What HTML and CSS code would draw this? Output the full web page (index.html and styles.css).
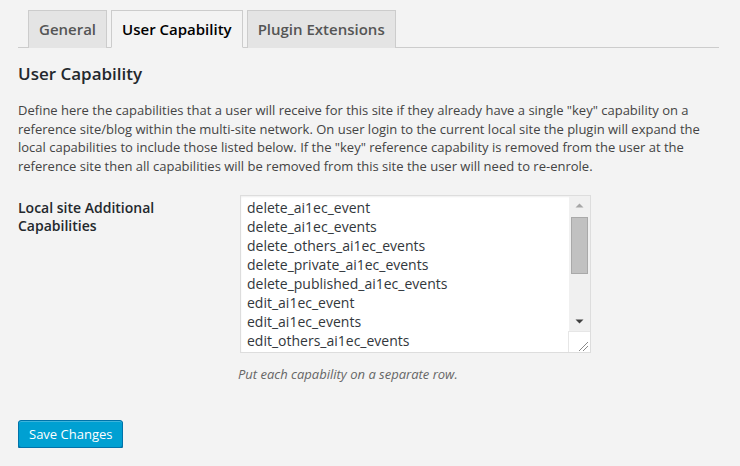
FILE: index.html
```html
<!DOCTYPE html>
<html>
<head>
<meta charset="utf-8">
<link rel="stylesheet" href="styles.css">
</head>
<body>
<div class="wrap">
  <nav class="tabs">
    <a class="tab">General</a>
    <a class="tab active">User Capability</a>
    <a class="tab">Plugin Extensions</a>
  </nav>
  <h2 class="title">User Capability</h2>
  <p class="desc">Define here the capabilities that a user will receive for this site if they already have a single "key" capability on a reference site/blog within the multi-site network. On user login to the current local site the plugin will expand the local capabilities to include those listed below. If the "key" reference capability is removed from the user at the reference site then all capabilities will be removed from this site the user will need to re-enrole.</p>
  <div class="form-row">
    <label class="field-label" for="caps">Local site Additional Capabilities</label>
    <div class="field">
      <div class="caps-box">
        <textarea id="caps" class="caps">delete_ai1ec_event
delete_ai1ec_events
delete_others_ai1ec_events
delete_private_ai1ec_events
delete_published_ai1ec_events
edit_ai1ec_event
edit_ai1ec_events
edit_others_ai1ec_events
edit_private_ai1ec_events
edit_published_ai1ec_events
manage_ai1ec_feeds
manage_ai1ec_options
publish_ai1ec_events
read_ai1ec_event</textarea>
        <div class="sbar" aria-hidden="true">
          <div class="sb-btn">
            <svg width="9" height="5" viewBox="0 0 9 5"><path d="M0.5 4.5 L4.5 0.5 L8.5 4.5 Z" fill="#a6a6a6"/></svg>
          </div>
          <div class="sb-track"><div class="sb-thumb"></div></div>
          <div class="sb-btn">
            <svg width="9" height="5" viewBox="0 0 9 5"><path d="M0.5 0.5 L8.5 0.5 L4.5 4.5 Z" fill="#404040"/></svg>
          </div>
          <div class="sb-corner">
            <svg width="20" height="20" viewBox="0 0 20 20"><path d="M10 19 L19 10 M14 19 L19 14" stroke="#8a8a8a" stroke-width="1"/></svg>
          </div>
        </div>
      </div>
      <p class="hint">Put each capability on a separate row.</p>
    </div>
  </div>
  <button class="btn-primary">Save Changes</button>
</div>
</body>
</html>
```

FILE: styles.css
```css
html, body {
  margin: 0;
  padding: 0;
  background: #f3f3f3;
}
body {
  font-family: "Open Sans", "Noto Sans", sans-serif;
  color: #444;
  font-size: 13px;
}
.wrap {
  padding: 10px 21px 0 18px;
}
.tabs {
  display: flex;
  gap: 4px;
  padding-left: 10px;
  border-bottom: 1px solid #ccc;
  height: 37px;
}
.tab {
  display: block;
  box-sizing: border-box;
  height: 38px;
  padding: 6px 10px;
  font-size: 15px;
  line-height: 24px;
  font-weight: 600;
  color: #555;
  background: #e4e4e4;
  border: 1px solid #ccc;
  border-bottom: none;
}
.tab.active {
  background: #f3f3f3;
  color: #000;
  border-bottom: 1px solid #f3f3f3;
}
.title {
  margin: 16px 0 0;
  font-size: 17px;
  line-height: 20px;
  font-weight: 600;
  color: #23282d;
}
.desc {
  margin: 17px 0 0;
  line-height: 18.6px;
  color: #444;
}
.form-row {
  display: grid;
  grid-template-columns: 222px 1fr;
  margin-top: 20px;
}
.field-label {
  font-size: 14px;
  font-weight: 600;
  line-height: 18px;
  color: #23282d;
  padding-top: 4px;
  width: 160px;
}
.caps-box {
  display: flex;
  box-sizing: border-box;
  width: 351px;
  height: 158px;
  border: 1px solid #ddd;
  background: #fff;
  box-shadow: inset 0 1px 2px rgba(0, 0, 0, 0.07);
}
.caps {
  flex: 1;
  min-width: 0;
  margin: 0;
  padding: 2px 6px;
  border: none;
  background: transparent;
  color: #32373c;
  font-family: "Open Sans", "Noto Sans", sans-serif;
  font-size: 14px;
  line-height: 19px;
  resize: none;
  overflow: hidden;
  white-space: pre;
  outline: none;
}
.sbar {
  width: 21px;
  display: flex;
  flex-direction: column;
  background: #f0f0f0;
}
.sb-btn {
  height: 19px;
  display: flex;
  align-items: center;
  justify-content: center;
}
.sb-track {
  flex: 1;
  padding: 2px 2px 0 2px;
}
.sb-thumb {
  box-sizing: border-box;
  height: 57px;
  background: #c1c1c1;
  border: 1px solid #a9a9a9;
}
.sb-corner {
  height: 20px;
  background: #fff;
  border-top: 1px solid #e6e6e6;
  border-left: 1px solid #e6e6e6;
  margin-left: -1px;
}
.sb-corner svg {
  display: block;
}
.hint {
  margin: 12px 0 0 -2px;
  font-style: italic;
  color: #666;
  line-height: 18px;
}
.btn-primary {
  display: block;
  margin-top: 37px;
  height: 28px;
  padding: 0 10px 1px;
  font-family: "Open Sans", "Noto Sans", sans-serif;
  font-size: 13px;
  line-height: 26px;
  color: #fff;
  background: #00a0d2;
  border: 1px solid #0073aa;
  border-radius: 3px;
  box-shadow: 0 1px 0 #006799, inset 0 1px 0 rgba(120, 200, 230, 0.5);
  cursor: pointer;
}
```
